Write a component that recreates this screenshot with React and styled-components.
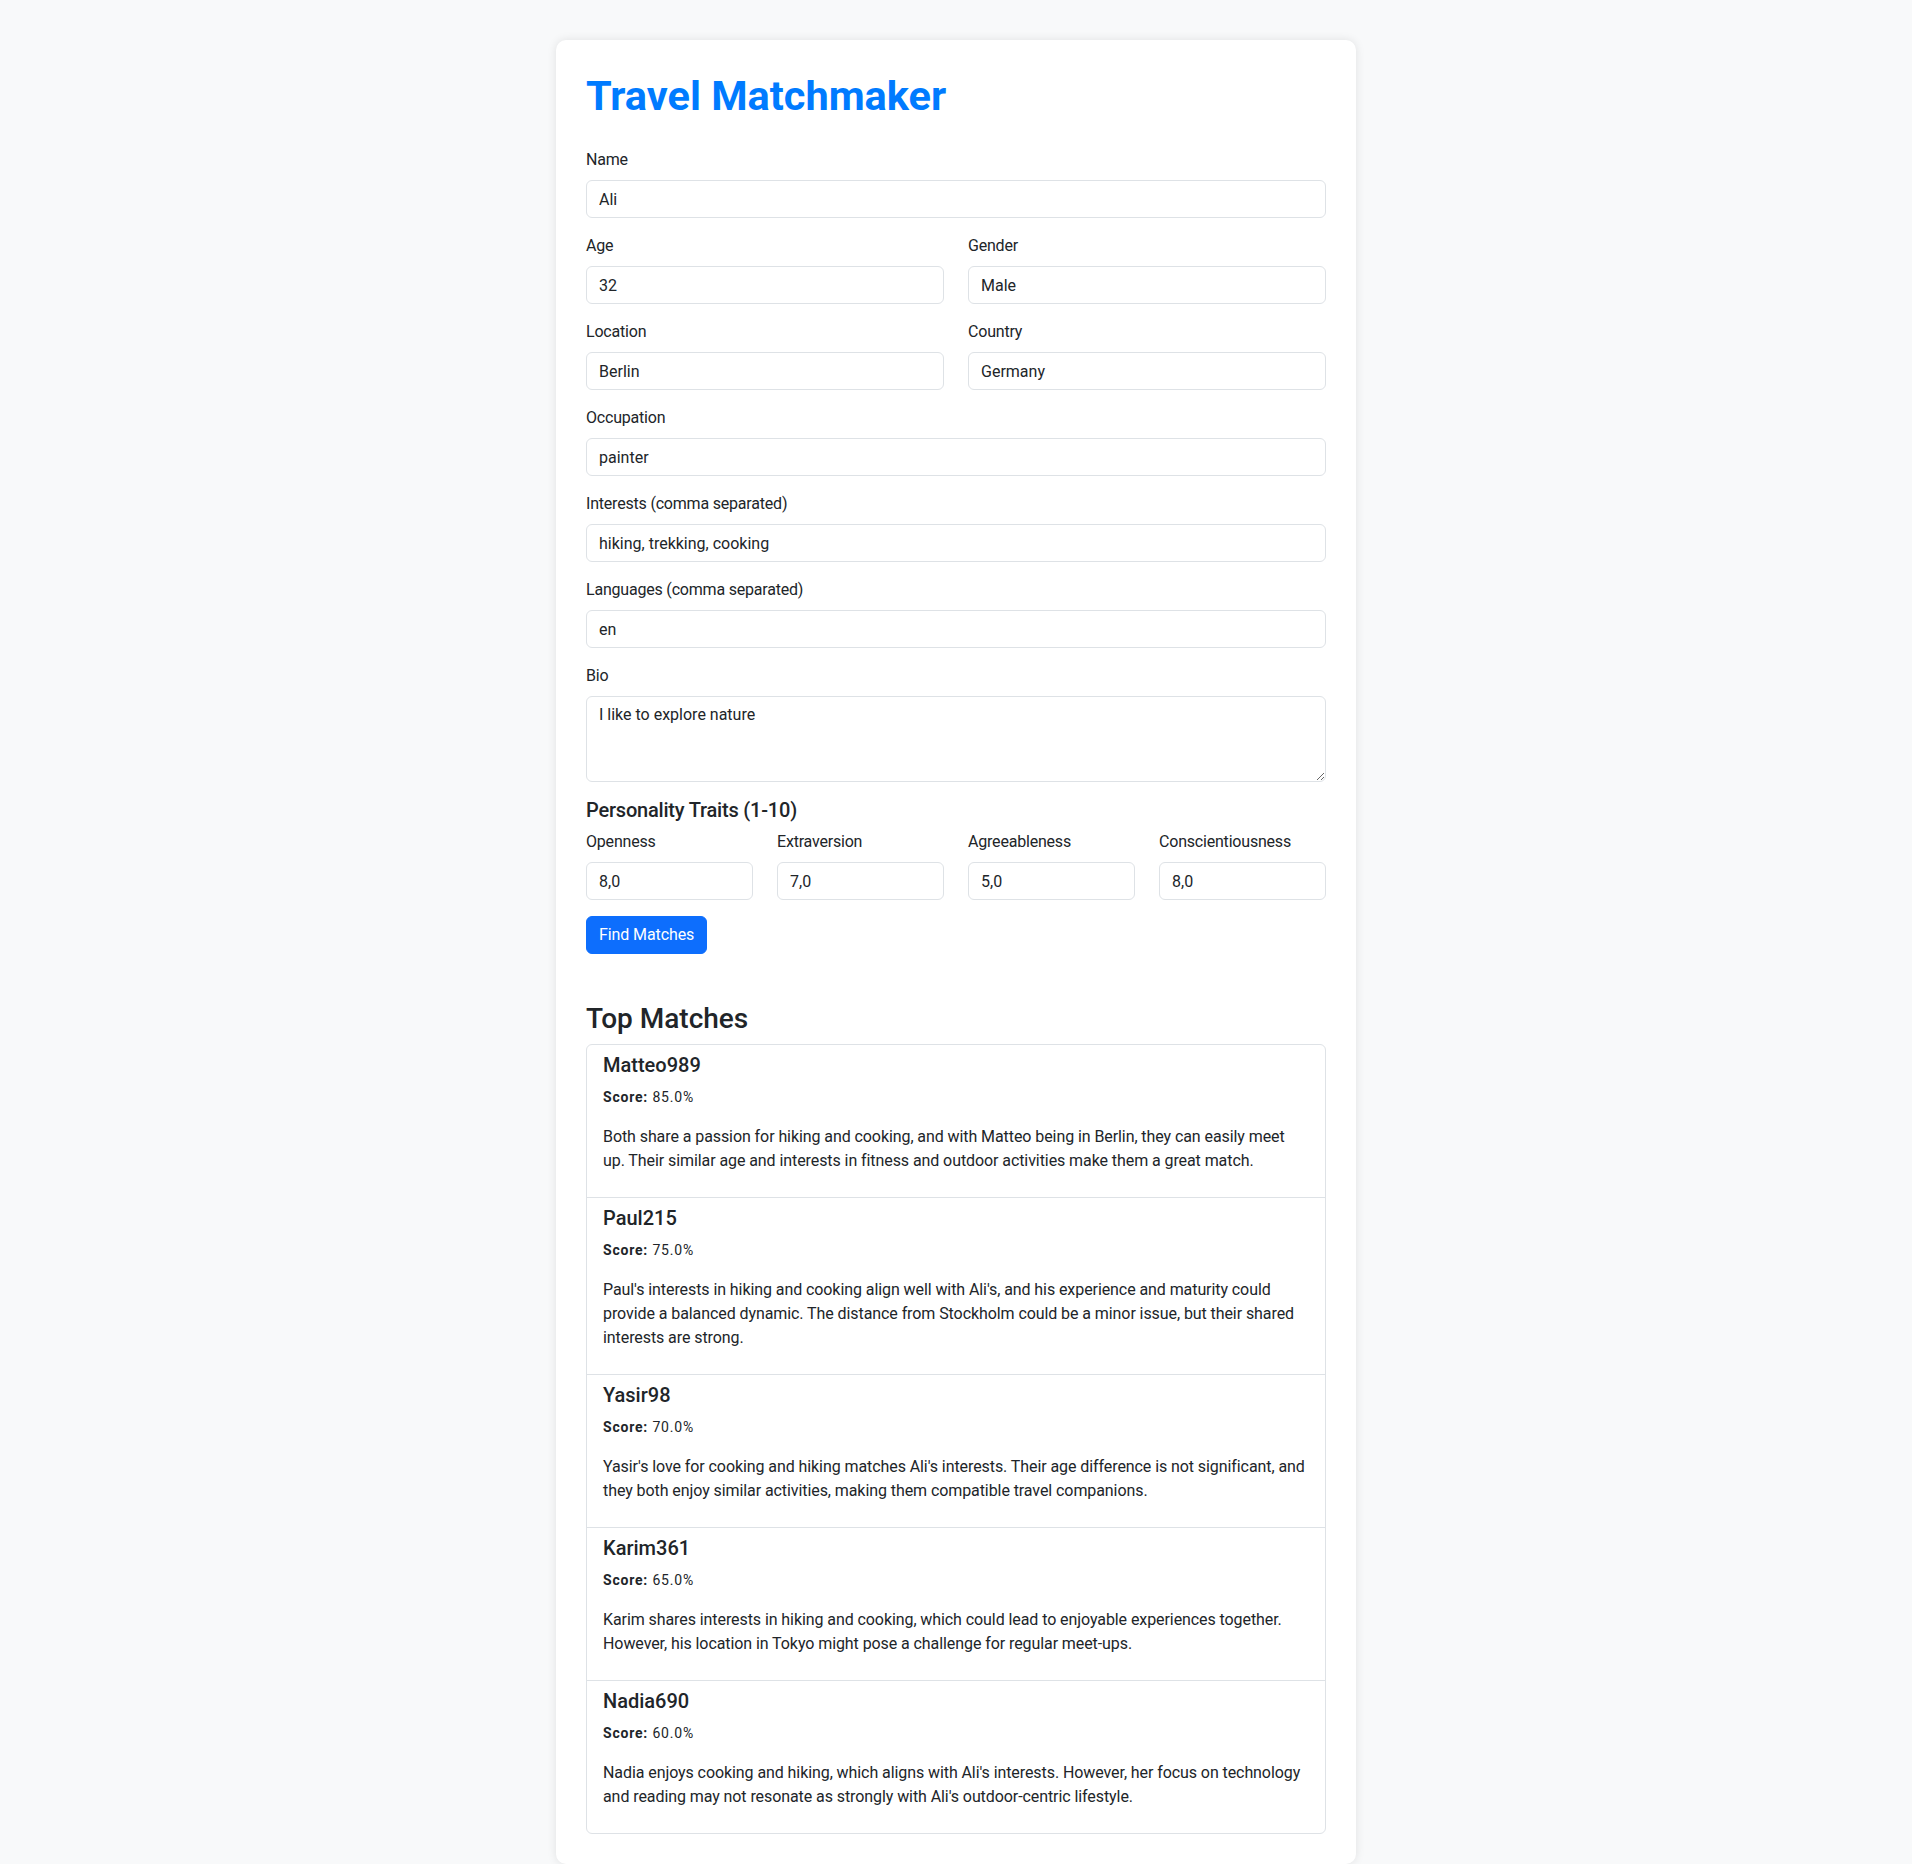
import React from 'react';
import styled, { createGlobalStyle } from 'styled-components';

const GlobalStyle = createGlobalStyle`
  *, *::before, *::after {
    box-sizing: border-box;
  }

  body {
    margin: 0;
    background: #f8f9fa;
    color: #212529;
    font-family: Roboto, "Liberation Sans", sans-serif;
    font-size: 16px;
    line-height: 1.5;
  }
`;

const Card = styled.div`
  width: 800px;
  margin: 40px auto;
  padding: 30px;
  background: #fff;
  border-radius: 10px;
  box-shadow: 0 0 10px rgba(0, 0, 0, 0.1);
`;

const Title = styled.h1`
  margin: 0 0 28px;
  padding-top: 2px;
  font-size: 41.5px;
  font-weight: 700;
  line-height: 48px;
  color: #007bff;
`;

const Grid = styled.div`
  display: grid;
  grid-template-columns: repeat(${({ cols }) => cols || 1}, 1fr);
  column-gap: 24px;
`;

const Field = styled.div`
  margin-bottom: 16px;
`;

const Label = styled.label`
  display: inline-block;
  margin-bottom: 8px;
  letter-spacing: -0.2px;
`;

const Input = styled.input`
  display: block;
  width: 100%;
  height: 38px;
  padding: 6px 12px;
  font: inherit;
  color: #212529;
  background: #fff;
  border: 1px solid #dee2e6;
  border-radius: 6px;
  outline: none;
`;

const TextArea = styled.textarea`
  display: block;
  width: 100%;
  height: 86px;
  padding: 6px 12px;
  font: inherit;
  color: #212529;
  background: #fff;
  border: 1px solid #dee2e6;
  border-radius: 6px;
  resize: vertical;
  outline: none;
`;

const SectionTitle = styled.h5`
  margin: 0 0 8px;
  font-size: 20px;
  font-weight: 500;
  line-height: 1.2;
  letter-spacing: -0.2px;
`;

const Button = styled.button`
  display: inline-block;
  padding: 6px 12px;
  font: inherit;
  letter-spacing: -0.1px;
  color: #fff;
  background: #0d6efd;
  border: 1px solid #0d6efd;
  border-radius: 6px;
  cursor: pointer;
`;

const MatchesTitle = styled.h3`
  margin: 48px 0 8px;
  font-size: 28px;
  font-weight: 500;
  line-height: 1.2;
`;

const List = styled.ul`
  margin: 0;
  padding: 0;
  list-style: none;
  border: 1px solid #dee2e6;
  border-radius: 6px;
`;

const Item = styled.li`
  padding: 8px 16px;

  & + & {
    border-top: 1px solid #dee2e6;
  }
`;

const Name = styled.h5`
  margin: 0 0 8px;
  font-size: 20px;
  font-weight: 500;
  line-height: 1.2;
`;

const Text = styled.p`
  margin: 0 0 16px;
  letter-spacing: -0.08px;

  small {
    font-size: 14px;
    letter-spacing: 0.8px;
  }
`;

const traits = [
  ['Openness', '8,0'],
  ['Extraversion', '7,0'],
  ['Agreeableness', '5,0'],
  ['Conscientiousness', '8,0'],
];

const matches = [
  {
    name: 'Matteo989',
    score: '85.0%',
    text: 'Both share a passion for hiking and cooking, and with Matteo being in Berlin, they can easily meet up. Their similar age and interests in fitness and outdoor activities make them a great match.',
  },
  {
    name: 'Paul215',
    score: '75.0%',
    text: "Paul's interests in hiking and cooking align well with Ali's, and his experience and maturity could provide a balanced dynamic. The distance from Stockholm could be a minor issue, but their shared interests are strong.",
  },
  {
    name: 'Yasir98',
    score: '70.0%',
    text: "Yasir's love for cooking and hiking matches Ali's interests. Their age difference is not significant, and they both enjoy similar activities, making them compatible travel companions.",
  },
  {
    name: 'Karim361',
    score: '65.0%',
    text: 'Karim shares interests in hiking and cooking, which could lead to enjoyable experiences together. However, his location in Tokyo might pose a challenge for regular meet-ups.',
  },
  {
    name: 'Nadia690',
    score: '60.0%',
    text: "Nadia enjoys cooking and hiking, which aligns with Ali's interests. However, her focus on technology and reading may not resonate as strongly with Ali's outdoor-centric lifestyle.",
  },
];

function TextField({ label, value }) {
  return (
    <Field>
      <Label>{label}</Label>
      <Input type="text" defaultValue={value} />
    </Field>
  );
}

function App() {
  return (
    <>
      <GlobalStyle />
      <Card>
        <Title>Travel Matchmaker</Title>
        <form onSubmit={(e) => e.preventDefault()}>
          <TextField label="Name" value="Ali" />
          <Grid cols={2}>
            <TextField label="Age" value="32" />
            <TextField label="Gender" value="Male" />
          </Grid>
          <Grid cols={2}>
            <TextField label="Location" value="Berlin" />
            <TextField label="Country" value="Germany" />
          </Grid>
          <TextField label="Occupation" value="painter" />
          <TextField label="Interests (comma separated)" value="hiking, trekking, cooking" />
          <TextField label="Languages (comma separated)" value="en" />
          <Field>
            <Label>Bio</Label>
            <TextArea rows={3} defaultValue="I like to explore nature" />
          </Field>
          <SectionTitle>Personality Traits (1-10)</SectionTitle>
          <Grid cols={4}>
            {traits.map(([label, value]) => (
              <TextField key={label} label={label} value={value} />
            ))}
          </Grid>
          <Button type="submit">Find Matches</Button>
        </form>

        <MatchesTitle>Top Matches</MatchesTitle>
        <List>
          {matches.map((m) => (
            <Item key={m.name}>
              <Name>{m.name}</Name>
              <Text>
                <small>
                  <strong>Score:</strong> {m.score}
                </small>
              </Text>
              <Text>{m.text}</Text>
            </Item>
          ))}
        </List>
      </Card>
    </>
  );
}

export default App;
